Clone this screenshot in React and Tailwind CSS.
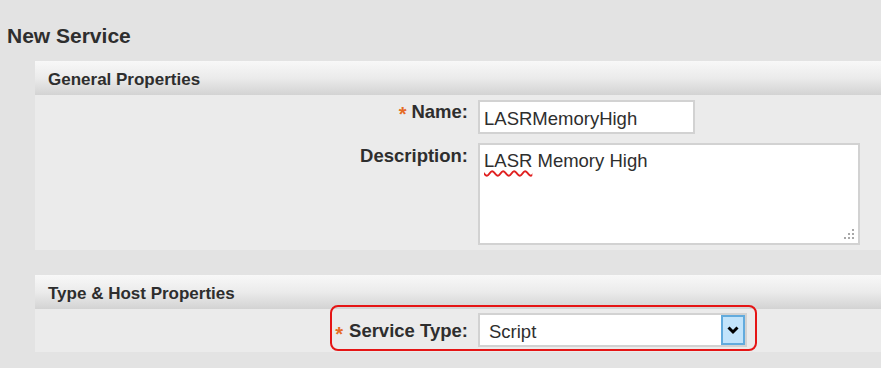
export default function App() {
  return (
    <div className="h-[368px] w-[881px] overflow-hidden bg-[#e3e3e3] font-['Liberation_Sans',Arial,sans-serif] text-[#2e2e2e]">
      <div className="pl-[7px] pt-[24px] h-[48px] text-[21px] leading-[24px] font-bold">New Service</div>

      {/* General Properties */}
      <div className="ml-[35px] mt-[13px]">
        <div className="h-[34px] pl-[13px] pt-[3px] flex items-center bg-gradient-to-b from-[#f8f8f8] via-[#ebebeb] to-[#d3d3d3] text-[17px] font-bold leading-[20px]">
          General Properties
        </div>
        <div className="bg-[#ebebeb] pt-[5px] pb-[5px] grid grid-cols-[433px_auto] gap-x-[10px] gap-y-[9px] text-[18.5px] leading-[22px]">
          <div className="text-right font-bold pt-[1px]">
            <span className="text-[#e56b25] text-[20px] mr-[5px] align-[-3px]">*</span>Name:
          </div>
          <div className="w-[217px] h-[34px] bg-white border-2 border-[#d2d2d2] pl-[4px] pt-[6px] whitespace-nowrap">
            LASRMemoryHigh
          </div>
          <div className="text-right font-bold pt-[2px]">Description:</div>
          <div className="relative w-[382px] h-[102px] bg-white border-2 border-[#d2d2d2] pl-[4px] pt-[5px]">
            <span className="underline decoration-wavy decoration-[#e02020] decoration-[1.5px] underline-offset-[3px]">LASR</span> Memory High
            <svg className="absolute right-[3px] bottom-[3px]" width="12" height="12" viewBox="0 0 12 12">
              <rect x="9" y="1" width="2" height="2" fill="#a8a8a8" />
              <rect x="5" y="5" width="2" height="2" fill="#a8a8a8" />
              <rect x="9" y="5" width="2" height="2" fill="#a8a8a8" />
              <rect x="1" y="9" width="2" height="2" fill="#a8a8a8" />
              <rect x="5" y="9" width="2" height="2" fill="#a8a8a8" />
              <rect x="9" y="9" width="2" height="2" fill="#a8a8a8" />
            </svg>
          </div>
        </div>
      </div>

      {/* Type & Host Properties */}
      <div className="ml-[35px] mt-[25px]">
        <div className="h-[34px] pl-[13px] pt-[3px] flex items-center bg-gradient-to-b from-[#f8f8f8] via-[#ebebeb] to-[#d3d3d3] text-[17px] font-bold leading-[20px]">
          Type &amp; Host Properties
        </div>
        <div className="relative bg-[#ebebeb] pt-[4px] pb-[5px] grid grid-cols-[433px_auto] gap-x-[10px] text-[18.5px] leading-[22px]">
          <div className="text-right font-bold pt-[7px]">
            <span className="text-[#e56b25] text-[20px] mr-[6px] align-[-4px]">*</span>Service Type:
          </div>
          <div className="w-[269px] h-[34px] bg-white border-2 border-[#d2d2d2] flex">
            <div className="flex-1 pl-[9px] pt-[6px]">Script</div>
            <div className="w-[24px] h-full bg-[#c2e4fb] border-2 border-[#62abdd] flex items-center justify-center">
              <svg width="12" height="9" viewBox="0 0 12 9">
                <polyline points="1.5,1.5 6,6 10.5,1.5" fill="none" stroke="#000" strokeWidth="3" />
              </svg>
            </div>
          </div>
          <div className="absolute left-[295px] top-[-4px] w-[427px] h-[46px] border-2 border-[#e51515] rounded-[8px] pointer-events-none" />
        </div>
      </div>
    </div>
  );
}
